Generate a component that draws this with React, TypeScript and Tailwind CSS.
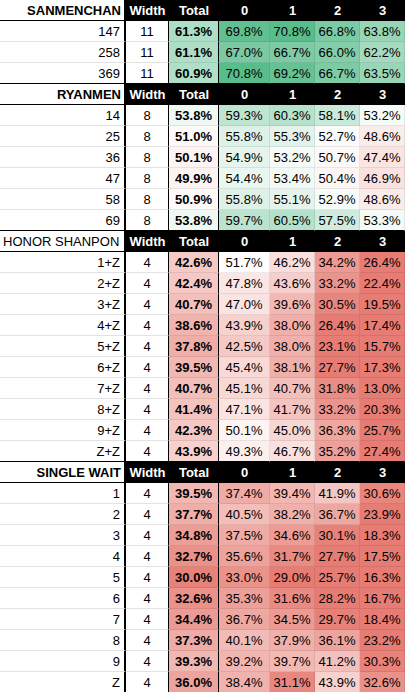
import React from "react";

type Row = [string, number, number, number, number, number, number];

const sections: { name: string; plain?: boolean; rows: Row[] }[] = [
  {
    name: "SANMENCHAN",
    rows: [
      ["147", 11, 61.3, 69.8, 70.8, 66.8, 63.8],
      ["258", 11, 61.1, 67.0, 66.7, 66.0, 62.2],
      ["369", 11, 60.9, 70.8, 69.2, 66.7, 63.5],
    ],
  },
  {
    name: "RYANMEN",
    rows: [
      ["14", 8, 53.8, 59.3, 60.3, 58.1, 53.2],
      ["25", 8, 51.0, 55.8, 55.3, 52.7, 48.6],
      ["36", 8, 50.1, 54.9, 53.2, 50.7, 47.4],
      ["47", 8, 49.9, 54.4, 53.4, 50.4, 46.9],
      ["58", 8, 50.9, 55.8, 55.1, 52.9, 48.6],
      ["69", 8, 53.8, 59.7, 60.5, 57.5, 53.3],
    ],
  },
  {
    name: "HONOR SHANPON",
    plain: true,
    rows: [
      ["1+Z", 4, 42.6, 51.7, 46.2, 34.2, 26.4],
      ["2+Z", 4, 42.4, 47.8, 43.6, 33.2, 22.4],
      ["3+Z", 4, 40.7, 47.0, 39.6, 30.5, 19.5],
      ["4+Z", 4, 38.6, 43.9, 38.0, 26.4, 17.4],
      ["5+Z", 4, 37.8, 42.5, 38.0, 23.1, 15.7],
      ["6+Z", 4, 39.5, 45.4, 38.1, 27.7, 17.3],
      ["7+Z", 4, 40.7, 45.1, 40.7, 31.8, 13.0],
      ["8+Z", 4, 41.4, 47.1, 41.7, 33.2, 20.3],
      ["9+Z", 4, 42.3, 50.1, 45.0, 36.3, 25.7],
      ["Z+Z", 4, 43.9, 49.3, 46.7, 35.2, 27.4],
    ],
  },
  {
    name: "SINGLE WAIT",
    rows: [
      ["1", 4, 39.5, 37.4, 39.4, 41.9, 30.6],
      ["2", 4, 37.7, 40.5, 38.2, 36.7, 23.9],
      ["3", 4, 34.8, 37.5, 34.6, 30.1, 18.3],
      ["4", 4, 32.7, 35.6, 31.7, 27.7, 17.5],
      ["5", 4, 30.0, 33.0, 29.0, 25.7, 16.3],
      ["6", 4, 32.6, 35.3, 31.6, 28.2, 16.7],
      ["7", 4, 34.4, 36.7, 34.5, 29.7, 18.4],
      ["8", 4, 37.3, 40.1, 37.9, 36.1, 23.2],
      ["9", 4, 39.3, 39.2, 39.7, 41.2, 30.3],
      ["Z", 4, 36.0, 38.4, 31.1, 43.9, 32.6],
    ],
  },
];

// red -> white -> green scale, like the sheet's conditional format
function heat(v: number) {
  const mid = 52;
  const mix = (c: number[], t: number) =>
    `rgb(${c.map((x) => Math.round(255 + (x - 255) * t)).join(",")})`;
  if (v < mid) return mix([230, 124, 115], Math.min(1, (mid - v) / 23));
  return mix([87, 187, 138], Math.min(1, (v - mid) / 19));
}

const grid = "grid h-[21px] grid-cols-[126px_43px_50px_51px_45px_45px_45px]";
const cell = "flex items-center justify-center border-b";
const soft = "border-b-[#00000014] border-r border-r-[#00000014]";

function Header({ name, plain }: { name: string; plain?: boolean }) {
  return (
    <div className={`${grid} bg-black font-bold text-white`}>
      <div
        className={`flex items-center overflow-hidden whitespace-nowrap border-r-2 border-b border-black bg-white text-black ${
          plain ? "justify-start pl-[3px] font-normal" : "justify-end pr-[3px]"
        }`}
      >
        {name}
      </div>
      {["Width", "Total", "0", "1", "2", "3"].map((h) => (
        <div key={h} className="flex items-center justify-center border-b border-black">
          {h}
        </div>
      ))}
    </div>
  );
}

export default function App() {
  return (
    <div className="w-[405px] overflow-hidden bg-white [font-family:'Liberation_Sans',Arial,sans-serif] text-[13px] leading-none text-black">
      {sections.map((s) => (
        <div key={s.name}>
          <Header name={s.name} plain={s.plain} />
          {s.rows.map((r, i) => {
            const last = i === s.rows.length - 1;
            const line = last ? "border-b-black" : "border-b-[#e2e2e2]";
            const [label, width, total, ...cols] = r;
            return (
              <div key={label} className={grid}>
                <div className={`flex items-center justify-end border-b border-r-2 border-r-black pr-1 ${line}`}>
                  {label}
                </div>
                <div className={`${cell} border-r border-r-black ${line}`}>{width}</div>
                <div
                  className={`${cell} border-r border-r-black font-bold ${last ? "border-b-black" : "border-b-[#00000014]"}`}
                  style={{ backgroundColor: heat(total) }}
                >
                  {total.toFixed(1)}%
                </div>
                {cols.map((v, j) => (
                  <div
                    key={j}
                    className={`${cell} ${soft} ${last ? "border-b-black" : ""}`}
                    style={{ backgroundColor: heat(v) }}
                  >
                    {v.toFixed(1)}%
                  </div>
                ))}
              </div>
            );
          })}
        </div>
      ))}
    </div>
  );
}
